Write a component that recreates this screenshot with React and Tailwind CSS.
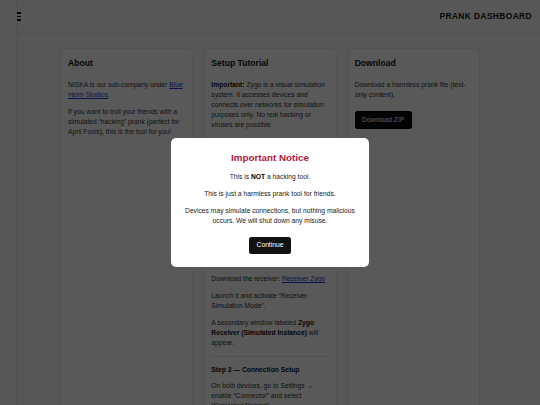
const Card = ({ title, children }) => (
  <div className="rounded-[4px] border border-[#ececec] bg-white px-[7px] pt-[8px] pb-4">
    <h2 className="mb-[11px] text-[8.6px] font-bold leading-[12px] text-[#111]">{title}</h2>
    {children}
  </div>
);

const P = ({ children }) => <p className="mb-[7px] text-[6.72px] leading-[10px] text-[#333]">{children}</p>;

const A = ({ children }) => <a href="#" className="text-[#1a3fd8] underline">{children}</a>;

const Step = ({ title, children, gap = "mb-[6px]" }) => (
  <>
    <hr className="my-[8px] border-t border-[#e6e6e6]" />
    <h4 className={`${gap} text-[6.72px] font-bold leading-[10px] text-[#111]`}>{title}</h4>
    {children}
  </>
);

export default function App() {
  return (
    <div className="relative h-screen overflow-hidden bg-[#f8f8f8] font-[Liberation_Sans,Arial,sans-serif]">
      {/* collapsed sidebar */}
      <aside className="absolute left-0 top-0 z-10 h-full w-[18px] border-r border-[#dcdcdc] bg-[#f8f8f8]" />

      <header className="flex h-[34px] items-center justify-between border-b border-[#e4e4e4] pl-[17px] pr-2">
        <div className="relative z-20 flex flex-col gap-[2.2px]">
          <span className="block h-[1.6px] w-[4px] bg-[#111]" />
          <span className="block h-[1.6px] w-[4px] bg-[#111]" />
          <span className="block h-[1.6px] w-[4px] bg-[#111]" />
        </div>
        <h1 className="text-[8.3px] font-bold tracking-[0.45px] text-[#111]">PRANK DASHBOARD</h1>
      </header>

      <main className="pt-[14px]">
        <div className="mx-auto grid w-[420px] grid-cols-3 gap-[10px]">
          <Card title="About">
            <P>
              NISKA is our sub-company under <A>Blue Helm Studios</A>.
            </P>
            <P>If you want to troll your friends with a simulated “hacking” prank (perfect for April Fools), this is the tool for you!</P>
          </Card>

          <Card title="Setup Tutorial">
            <P>
              <b className="text-[#111]">Important:</b> Zygo is a visual simulation system. It accesses devices and connects over networks for simulation purposes only. No real hacking or viruses are possible.
            </P>
            <Step title="Step 1 — Sender Device" gap="mb-[7px]">
              <P>Download the sender to your main device: <A>Sender Zygo</A></P>
              <P>Launch it and activate “Sender Simulation Mode”.</P>
              <P>
                A main window labeled <b className="text-[#111]">Zygo Sender (Simulated Instance)</b> will appear.
              </P>
            </Step>
            <Step title="Step 2 — Receiver Device" gap="mb-[9px]">
              <P>Download the receiver: <A>Receiver Zygo</A></P>
              <P>Launch it and activate “Receiver Simulation Mode”.</P>
              <P>
                A secondary window labeled <b className="text-[#111]">Zygo Receiver (Simulated Instance)</b> will appear.
              </P>
            </Step>
            <Step title="Step 3 — Connection Setup">
              <P>On both devices, go to Settings → enable “Connector” and select “Simulated Pairing”.</P>
              <P>Press Connect and watch the fake hacking animation play.</P>
            </Step>
          </Card>

          <Card title="Download">
            <p className="text-[6.72px] leading-[10px] text-[#333]">Download a harmless prank file (text-only content).</p>
            <button className="mt-[11px] h-[17.6px] rounded-[2.5px] bg-[#0b0b0b] px-[7.4px] text-[6.72px] text-white">
              Download ZIP
            </button>
          </Card>
        </div>
      </main>

      {/* notice modal over a dimmed page */}
      <div className="absolute inset-0 z-50 flex items-center justify-center bg-[#000000a6]">
        <div className="w-[198px] rounded-[5px] bg-white px-3 pt-[14px] pb-[13px] text-center">
          <h3 className="mb-[8.5px] text-[9.8px] font-bold leading-[12px] text-[#b0163c]">Important Notice</h3>
          <p className="mb-[6.5px] text-[6.72px] leading-[10px] text-[#222]">
            This is <b className="text-black">NOT</b> a hacking tool.
          </p>
          <p className="mb-[7px] text-[6.72px] leading-[10px] text-[#222]">This is just a harmless prank tool for friends.</p>
          <p className="text-[6.72px] leading-[10px] text-[#222]">
            Devices may simulate connections, but nothing malicious occurs. We will shut down any misuse.
          </p>
          <button className="mt-[11px] h-[16.8px] rounded-[2.5px] bg-[#111] px-[7.4px] text-[6.72px] text-white">Continue</button>
        </div>
      </div>
    </div>
  );
}
